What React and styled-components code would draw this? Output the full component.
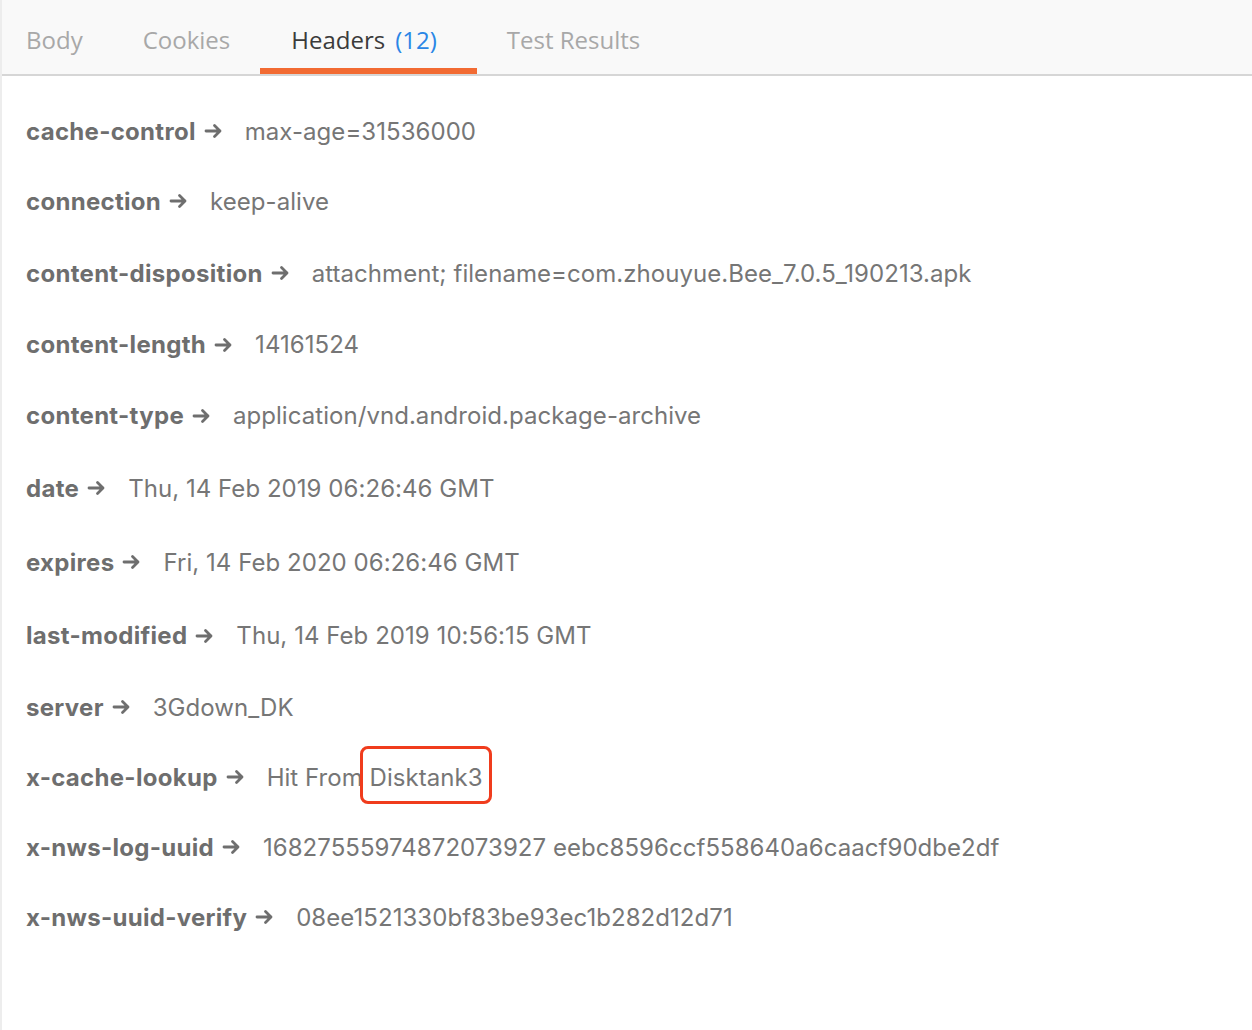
import React from 'react';
import styled, { createGlobalStyle } from 'styled-components';

const GlobalStyle = createGlobalStyle`
  html, body {
    margin: 0;
    padding: 0;
    background: #ffffff;
  }
`;

const Panel = styled.div`
  width: 1252px;
  height: 1030px;
  box-sizing: border-box;
  border-left: 2px solid #ededed;
  background: #fff;
  overflow: hidden;
`;

const TabBar = styled.div`
  display: flex;
  align-items: stretch;
  height: 76px;
  box-sizing: border-box;
  background: #f9f9f9;
  border-bottom: 2px solid #d6d6d6;
  padding-left: 24px;
`;

const Tab = styled.div`
  display: flex;
  align-items: center;
  font-family: "Open Sans", sans-serif;
  font-size: 24px;
  color: ${({ active }) => (active ? '#3b3b3b' : '#a8a8a8')};
  padding: 10px ${({ padR }) => padR}px 0 ${({ padL }) => padL}px;
  margin-right: ${({ gap }) => gap}px;
  box-sizing: border-box;
  border-bottom: 6px solid ${({ active }) => (active ? '#f26b33' : 'transparent')};
`;

const Count = styled.span`
  color: #2a86e6;
  margin-left: 10px;
`;

const List = styled.div`
  display: flex;
  flex-direction: column;
  padding: 21px 0 0 24px;
`;

const Row = styled.div`
  display: flex;
  align-items: center;
  height: ${({ h }) => h}px;
  font-family: Inter, "Liberation Sans", sans-serif;
  font-size: 24px;
  color: #737373;
`;

const Key = styled.span`
  font-weight: 700;
  color: #6e6e6e;
  letter-spacing: 0.3px;
`;

const Arrow = styled.svg`
  margin: 0 22px 0 8px;
  flex-shrink: 0;
`;

const Value = styled.span`
  color: #767676;
  letter-spacing: 0.05px;
`;

const Marked = styled.span`
  position: relative;
  &::after {
    content: '';
    position: absolute;
    left: -10px;
    right: -9px;
    top: -17px;
    bottom: -12px;
    border: 3px solid #f03c1d;
    border-radius: 8px;
  }
`;

const headers = [
  ['cache-control', 'max-age=31536000', 68],
  ['connection', 'keep-alive', 72],
  ['content-disposition', 'attachment; filename=com.zhouyue.Bee_7.0.5_190213.apk', 72],
  ['content-length', '14161524', 71],
  ['content-type', 'application/vnd.android.package-archive', 71],
  ['date', 'Thu, 14 Feb 2019 06:26:46 GMT', 74],
  ['expires', 'Fri, 14 Feb 2020 06:26:46 GMT', 74],
  ['last-modified', 'Thu, 14 Feb 2019 10:56:15 GMT', 73],
  ['server', '3Gdown_DK', 70],
  ['x-cache-lookup', null, 70],
  ['x-nws-log-uuid', '16827555974872073927 eebc8596ccf558640a6caacf90dbe2df', 70],
  ['x-nws-uuid-verify', '08ee1521330bf83be93ec1b282d12d71', 70],
];

function ArrowIcon() {
  return (
    <Arrow width="19" height="16" viewBox="0 0 19 16">
      <path d="M2 8h14M10.5 2.5L16 8l-5.5 5.5" fill="none" stroke="#6e6e6e" strokeWidth="2.8" strokeLinecap="round" strokeLinejoin="round" />
    </Arrow>
  );
}

export default function App() {
  return (
    <>
      <GlobalStyle />
      <Panel>
        <TabBar>
          <Tab padL={0} padR={0} gap={60}>Body</Tab>
          <Tab padL={0} padR={0} gap={30}>Cookies</Tab>
          <Tab active padL={31} padR={40} gap={30}>Headers<Count>(12)</Count></Tab>
          <Tab padL={0} padR={0} gap={0}>Test Results</Tab>
        </TabBar>
        <List>
          {headers.map(([k, v, h]) => (
            <Row key={k} h={h}>
              <Key>{k}</Key>
              <ArrowIcon />
              {v !== null ? (
                <Value>{v}</Value>
              ) : (
                <Value>Hit From <Marked>Disktank3</Marked></Value>
              )}
            </Row>
          ))}
        </List>
      </Panel>
    </>
  );
}
